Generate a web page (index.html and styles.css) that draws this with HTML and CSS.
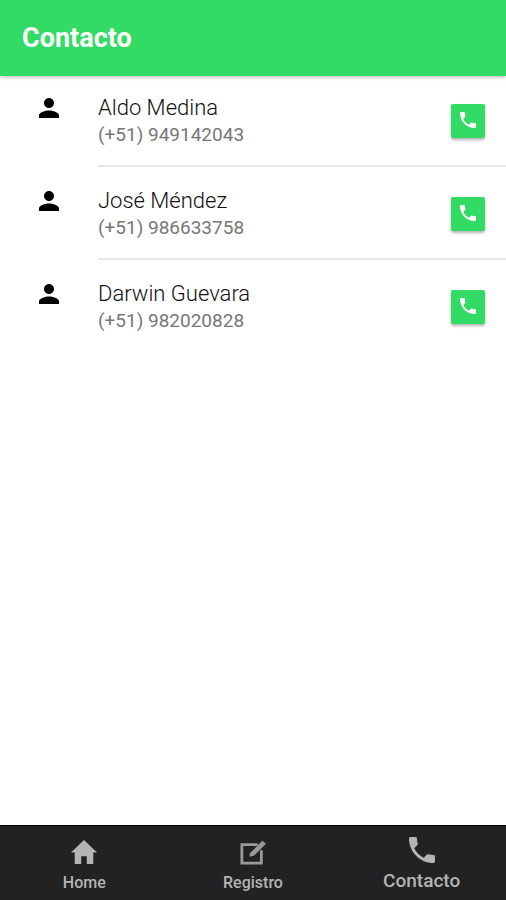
FILE: index.html
```html
<!DOCTYPE html>
<html lang="es">
<head>
<meta charset="utf-8">
<meta name="viewport" content="width=device-width, initial-scale=1">
<title>Contacto</title>
<link rel="stylesheet" href="styles.css">
</head>
<body>
<svg class="sprite" aria-hidden="true">
  <symbol id="person" viewBox="4 4 16 16"><path d="M12 12c2.200 0 4-1.800 4-4s-1.800-4-4-4-4 1.800-4 4 1.800 4 4 4zm0 2c-2.700 0-8 1.300-8 4v2h16v-2c0-2.700-5.300-4-8-4z"/></symbol>
  <symbol id="call" viewBox="3 3 18 18"><path d="M6.620 10.790c1.440 2.830 3.760 5.140 6.590 6.590l2.200-2.200c.27-.27.67-.36 1.020-.24 1.120.37 2.330.57 3.570.57.550 0 1 .45 1 1V20c0 .55-.45 1-1 1C10.610 21 3 13.390 3 4c0-.55.450-1 1-1h3.500c.55 0 1 .45 1 1 0 1.250.2 2.450.57 3.570.11.35.03.740-.25 1.020l-2.200 2.200z"/></symbol>
</svg>
<header class="toolbar"><h1 class="title">Contacto</h1></header>
<main class="content">
  <ul class="list">
    <li class="item">
      <svg class="avatar" aria-hidden="true"><use href="#person"/></svg>
      <div class="row">
        <div class="info"><h2 class="name">Aldo Medina</h2><p class="number">(+51) 949142043</p></div>
        <button class="call" type="button" aria-label="Llamar a Aldo Medina"><svg class="call-icon" aria-hidden="true"><use href="#call"/></svg></button>
      </div>
    </li>
    <li class="item">
      <svg class="avatar" aria-hidden="true"><use href="#person"/></svg>
      <div class="row">
        <div class="info"><h2 class="name">José Méndez</h2><p class="number">(+51) 986633758</p></div>
        <button class="call" type="button" aria-label="Llamar a José Méndez"><svg class="call-icon" aria-hidden="true"><use href="#call"/></svg></button>
      </div>
    </li>
    <li class="item">
      <svg class="avatar" aria-hidden="true"><use href="#person"/></svg>
      <div class="row">
        <div class="info"><h2 class="name">Darwin Guevara</h2><p class="number">(+51) 982020828</p></div>
        <button class="call" type="button" aria-label="Llamar a Darwin Guevara"><svg class="call-icon" aria-hidden="true"><use href="#call"/></svg></button>
      </div>
    </li>
  </ul>
</main>
<nav class="tabs">
  <a class="tab" href="#home">
    <svg class="tab-icon" viewBox="0 0 28 28" aria-hidden="true"><path d="M14 1 0 14.500h4V27h7v-8.500h6V27h7V14.500h4z"/></svg>
    <span>Home</span>
  </a>
  <a class="tab" href="#registro">
    <svg class="tab-icon" viewBox="0 0 28 28" aria-hidden="true"><path class="stroke" d="M19 6H2v20h21V12"/><path class="pen" d="m11 15 13-13 4 3-13 13-5 1z"/></svg>
    <span>Registro</span>
  </a>
  <a class="tab tab-active" href="#contacto" aria-current="page">
    <svg class="tab-icon" aria-hidden="true"><use href="#call"/></svg>
    <span>Contacto</span>
  </a>
</nav>
</body>
</html>
```
FILE: styles.css
```css
* {
  box-sizing: border-box;
}

body {
  display: flex;
  flex-direction: column;
  min-height: 100vh;
  margin: 0;
  background: #fff;
  color: #222;
  font-family: Roboto, "Liberation Sans", sans-serif;
}

.sprite {
  position: absolute;
  width: 0;
  height: 0;
}

.toolbar {
  padding: 22px;
  background: #32db64;
  box-shadow: 0 1px 4px rgba(0, 0, 0, 0.3);
}

.title {
  margin: 0;
  color: #fff;
  font-size: 27px;
  font-weight: 700;
  line-height: 32px;
}

.content {
  flex: 1;
}

.list {
  margin: 0;
  padding: 0;
  list-style: none;
}

.item {
  display: flex;
  align-items: flex-start;
  margin-bottom: 2px;
  padding-left: 39px;
}

.avatar {
  flex: none;
  width: 20px;
  height: 20px;
  margin: 22px 39px 0 0;
  fill: #000;
}

.row {
  display: flex;
  flex: 1;
  align-items: center;
  justify-content: space-between;
  height: 91px;
  padding-right: 21px;
  border-bottom: 2px solid #e6e6e6;
}

.item:last-child .row {
  border-bottom-color: transparent;
}

.name,
.number {
  margin: 0;
  font-weight: 400;
}

.name {
  color: #111;
  font-size: 22px;
  font-weight: 300;
  line-height: 28px;
}

.number {
  color: #777;
  font-size: 19px;
  line-height: 26px;
}

.call {
  display: flex;
  align-items: center;
  justify-content: center;
  width: 34px;
  height: 34px;
  padding: 0 0 2px;
  border: 0;
  border-radius: 2px;
  background: #32db64;
  box-shadow: 0 2px 3px rgba(0, 0, 0, 0.3);
}

.call-icon {
  width: 16px;
  height: 16px;
  fill: #fff;
}

.tabs {
  display: grid;
  grid-template-columns: repeat(3, 1fr);
  height: 75px;
  border-top: 1px solid #000;
  background: #222;
}

.tab {
  display: flex;
  flex-direction: column;
  align-items: center;
  gap: 6px;
  padding-top: 13px;
  color: #b4b4b4;
  font-size: 16px;
  font-weight: 500;
  line-height: 24px;
  text-decoration: none;
}

.tab-active {
  padding-top: 11px;
  font-size: 19px;
}

.tab-icon {
  width: 26px;
  height: 26px;
  fill: #b4b4b4;
}

.stroke {
  fill: none;
  stroke: #999;
  stroke-width: 3;
}

.pen {
  fill: #999;
}
```
